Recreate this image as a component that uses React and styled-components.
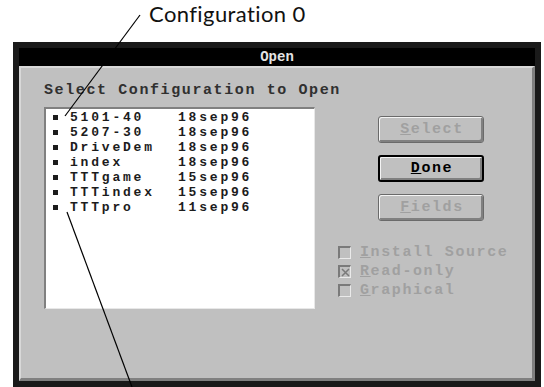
import React from 'react'
import styled, { createGlobalStyle } from 'styled-components'

const Global = createGlobalStyle`
  body {
    margin: 0;
    background: #fff;
  }
`

const Page = styled.div`
  position: relative;
  width: 544px;
  height: 387px;
  overflow: hidden;
  background: #fff;
`

const Caption = styled.div`
  height: 42px;
  box-sizing: border-box;
  padding: 0 0 0 149px;
  font-family: Lato, 'Open Sans', sans-serif;
  font-size: 22px;
  letter-spacing: 0.4px;
  color: #111;
`

const Frame = styled.div`
  margin-left: 13px;
  width: 528px;
  height: 345px;
  box-sizing: border-box;
  border: 6px solid #1a1a1a;
  display: flex;
  flex-direction: column;
`

const TitleBar = styled.div`
  height: 18px;
  background: #000;
  color: #e4e4e4;
  font-family: 'Liberation Mono', monospace;
  font-weight: bold;
  font-size: 14px;
  display: flex;
  align-items: center;
  justify-content: center;
`

const Body = styled.div`
  flex: 1;
  background: #c0c0c0;
  border-top: 2px solid #d8d8d8;
  border-left: 2px solid #d8d8d8;
  border-right: 3px solid #808080;
  border-bottom: 3px solid #808080;
  padding: 15px 0 0 23px;
  font-family: 'Liberation Mono', monospace;
  font-weight: bold;
  font-size: 15px;
  letter-spacing: 1.6px;
`

const Label = styled.div`
  line-height: 16px;
  color: #303030;
  margin-bottom: 8px;
`

const Row = styled.div`
  display: flex;
`

const ListBox = styled.div`
  width: 271px;
  height: 202px;
  box-sizing: border-box;
  background: #fff;
  border-top: 2px solid #808080;
  border-left: 2px solid #808080;
  border-right: 1px solid #e8e8e8;
  border-bottom: 1px solid #e8e8e8;
  padding: 1px 0 0 7px;
`

const Item = styled.div`
  display: flex;
  align-items: center;
  height: 15px;
  line-height: 15px;
  font-size: 13px;
  letter-spacing: 2.8px;
  color: #1c1c1c;
`

const Bullet = styled.span`
  width: 5px;
  height: 5px;
  background: #1c1c1c;
  margin-right: 12px;
`

const Name = styled.span`
  width: 108px;
`

const Side = styled.div`
  margin-left: 23px;
  display: flex;
  flex-direction: column;
`

const Buttons = styled.div`
  margin: 9px 0 0 40px;
  display: flex;
  flex-direction: column;
  gap: 12px;
`

const Button = styled.div`
  width: 106px;
  height: 27px;
  box-sizing: border-box;
  border: ${p => (p.$default ? '2px solid #000' : '1px solid #6a6a6a')};
  border-radius: 3px;
  background: #c0c0c0;
  box-shadow: inset 1px 1px #f4f4f4, inset -2px -2px #808080;
  display: flex;
  align-items: center;
  justify-content: center;
  color: ${p => (p.$disabled ? '#a0a0a0' : '#000')};
  padding-left: 2px;
`

const Key = styled.span`
  text-decoration: underline;
`

const Checks = styled.div`
  margin-top: 22px;
  display: flex;
  flex-direction: column;
`

const Check = styled.div`
  display: flex;
  align-items: center;
  height: 19px;
  line-height: 19px;
  color: #a0a0a0;
`

const Box = styled.span`
  width: 13px;
  height: 13px;
  box-sizing: border-box;
  border-top: 2px solid #7a7a7a;
  border-left: 2px solid #7a7a7a;
  border-right: 1px solid #eaeaea;
  border-bottom: 1px solid #eaeaea;
  background: #c0c0c0;
  margin-right: 9px;
  display: flex;
  align-items: center;
  justify-content: center;
`

const Overlay = styled.svg`
  position: absolute;
  left: 0;
  top: 0;
  pointer-events: none;
`

const files = [
  ['5101-40', '18sep96'],
  ['5207-30', '18sep96'],
  ['DriveDem', '18sep96'],
  ['index', '18sep96'],
  ['TTTgame', '15sep96'],
  ['TTTindex', '15sep96'],
  ['TTTpro', '11sep96'],
]

const options = [
  ['I', 'nstall Source', false],
  ['R', 'ead-only', true],
  ['G', 'raphical', false],
]

export default function App() {
  return (
    <Page>
      <Global />
      <Caption>Configuration 0</Caption>
      <Frame>
        <TitleBar>Open</TitleBar>
        <Body>
          <Label>Select Configuration to Open</Label>
          <Row>
            <ListBox>
              {files.map(([name, date]) => (
                <Item key={name}>
                  <Bullet />
                  <Name>{name}</Name>
                  <span>{date}</span>
                </Item>
              ))}
            </ListBox>
            <Side>
              <Buttons>
                <Button $disabled>
                  <Key>S</Key>elect
                </Button>
                <Button $default>
                  <Key>D</Key>one
                </Button>
                <Button $disabled>
                  <Key>F</Key>ields
                </Button>
              </Buttons>
              <Checks>
                {options.map(([k, rest, on]) => (
                  <Check key={k}>
                    <Box>
                      {on && (
                        <svg width="9" height="9" viewBox="0 0 9 9">
                          <path d="M1 1L8 8M8 1L1 8" stroke="#7a7a7a" strokeWidth="1.5" />
                        </svg>
                      )}
                    </Box>
                    <span>
                      <Key>{k}</Key>
                      {rest}
                    </span>
                  </Check>
                ))}
              </Checks>
            </Side>
          </Row>
        </Body>
      </Frame>
      <Overlay width="544" height="387" viewBox="0 0 544 387">
        <line x1="140" y1="15" x2="65" y2="116" stroke="#000" strokeWidth="1.2" />
        <line x1="67" y1="212" x2="132" y2="387" stroke="#000" strokeWidth="1.2" />
      </Overlay>
    </Page>
  )
}
